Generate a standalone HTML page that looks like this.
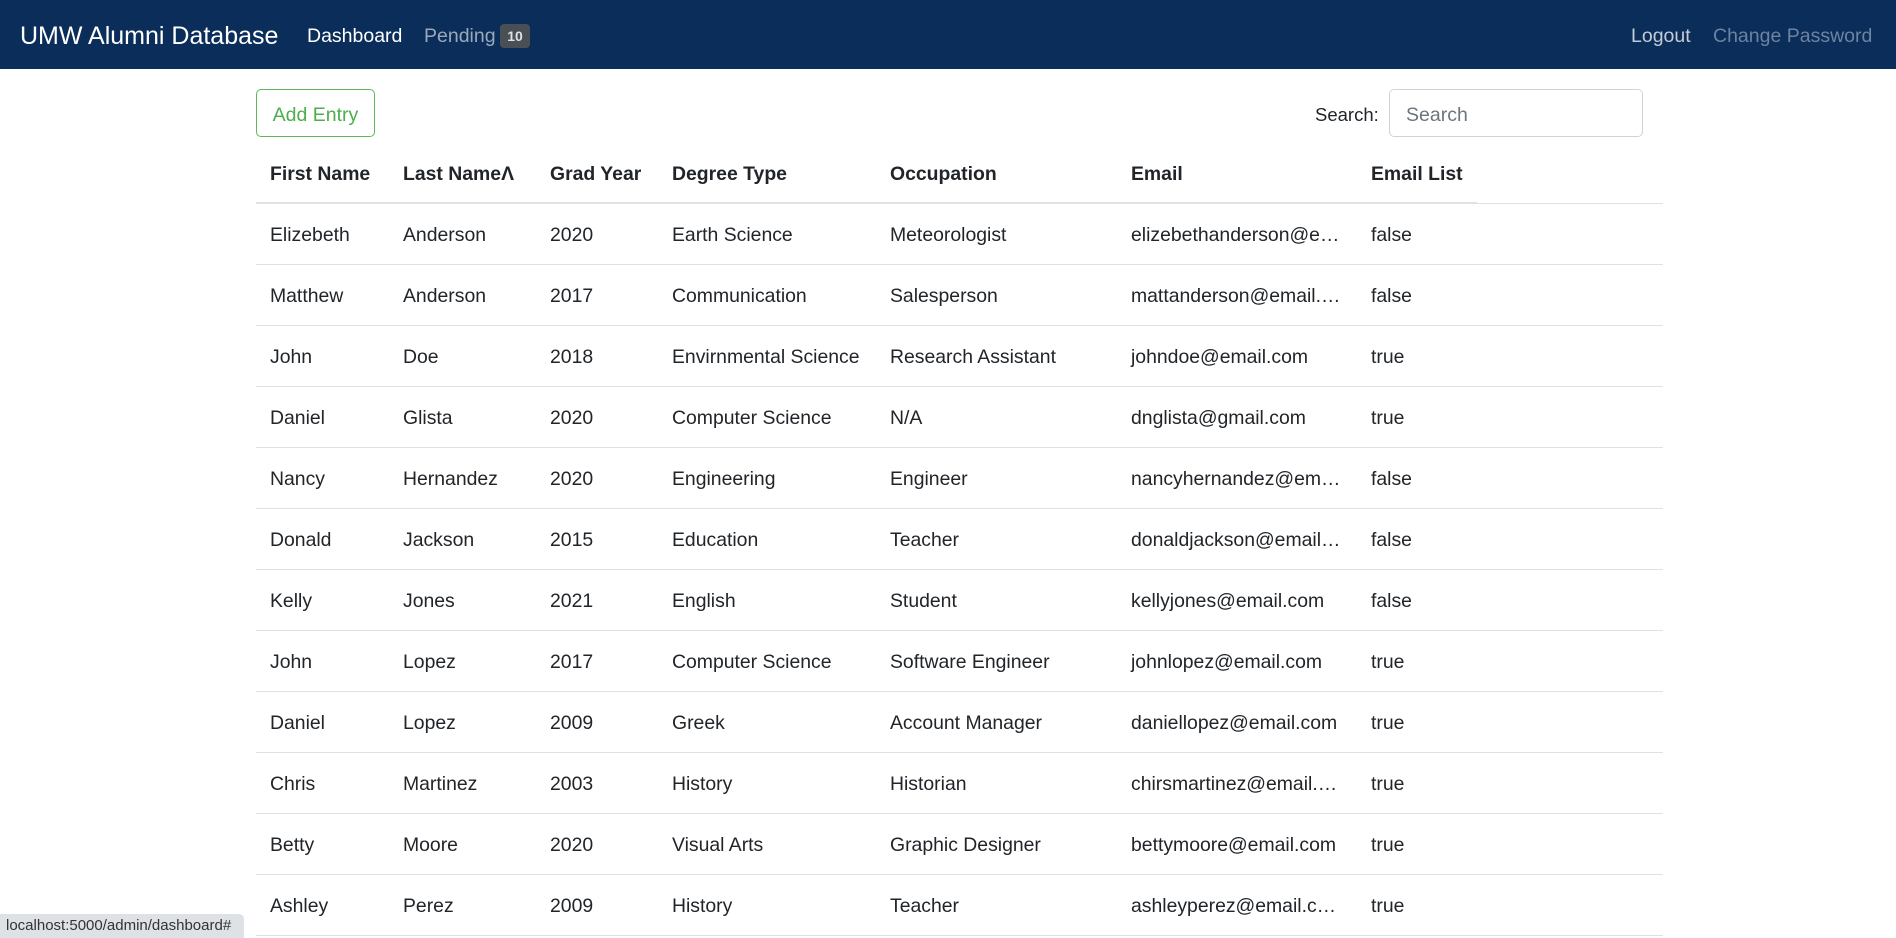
<!DOCTYPE html>
<html><head><meta charset="utf-8"><style>
*{box-sizing:border-box;margin:0;padding:0}
body{width:1896px;height:938px;overflow:hidden;background:#fff;font-family:"Liberation Sans",sans-serif;color:#212529;position:relative}
.nav{position:absolute;left:0;top:0;width:1896px;height:69px;background:#0a2d5a}
.nav span{position:absolute;top:2px;line-height:69px;font-size:19.5px;white-space:nowrap}
.brand{left:20px;font-size:25px!important;color:#fff}
.badge{position:absolute;left:500px;top:24px;width:30px;height:24px;background:#4a4f55;border-radius:4px;color:#dfe2e5;font-size:14px;font-weight:bold;text-align:center;line-height:24px}
.btn{position:absolute;left:256px;top:89px;width:119px;height:48px;border:1px solid #5cb85c;border-radius:5px;color:#4cae4c;font-size:19.5px;line-height:50px;text-align:center}
.slabel{position:absolute;left:1315px;top:91px;line-height:48px;font-size:18.5px}
.input{position:absolute;left:1389px;top:89px;width:254px;height:48px;border:1px solid #ced4da;border-radius:5px;color:#6c757d;font-size:19.5px;line-height:50px;padding-left:16px}
table{position:absolute;left:256px;top:140px;border-collapse:collapse;table-layout:fixed;width:1407px;font-size:19.4px}
th{height:63px;padding-top:6px;text-align:left;font-weight:bold;padding-left:14px;padding-right:14px;border-bottom:2px solid #dee2e6;white-space:nowrap}
th.e{border-bottom:1px solid #dee2e6}
td{height:61px;padding:4px 14px 0;border-bottom:1px solid #dee2e6;white-space:nowrap;overflow:hidden;text-overflow:ellipsis}
.status{position:absolute;left:0;top:914px;width:244px;height:24px;background:#dee1e6;border-top-right-radius:5px;font-size:15px;line-height:24px;padding-left:6px;color:#333}
</style></head><body>
<div class="nav">
<span class="brand">UMW Alumni Database</span>
<span style="left:307px;color:#fff">Dashboard</span>
<span style="left:424px;color:#9aa8bb">Pending</span>
<div class="badge">10</div>
<span style="left:1631px;color:#c5ccd6">Logout</span>
<span style="left:1713px;color:#6e83a0">Change Password</span>
</div>
<div class="btn">Add Entry</div>
<div class="slabel">Search:</div>
<div class="input">Search</div>
<table>
<colgroup><col style="width:133px"><col style="width:147px"><col style="width:122px"><col style="width:218px"><col style="width:241px"><col style="width:240px"><col style="width:120px"><col style="width:186px"></colgroup>
<tr><th>First Name</th><th>Last Name&#923;</th><th>Grad Year</th><th>Degree Type</th><th>Occupation</th><th>Email</th><th>Email List</th><th class="e"></th></tr>
<tr><td>Elizebeth</td><td>Anderson</td><td>2020</td><td>Earth Science</td><td>Meteorologist</td><td>elizebethanderson@email.com</td><td>false</td><td></td></tr>
<tr><td>Matthew</td><td>Anderson</td><td>2017</td><td>Communication</td><td>Salesperson</td><td>mattanderson@email.com</td><td>false</td><td></td></tr>
<tr><td>John</td><td>Doe</td><td>2018</td><td>Envirnmental Science</td><td>Research Assistant</td><td>johndoe@email.com</td><td>true</td><td></td></tr>
<tr><td>Daniel</td><td>Glista</td><td>2020</td><td>Computer Science</td><td>N/A</td><td>dnglista@gmail.com</td><td>true</td><td></td></tr>
<tr><td>Nancy</td><td>Hernandez</td><td>2020</td><td>Engineering</td><td>Engineer</td><td>nancyhernandez@email.com</td><td>false</td><td></td></tr>
<tr><td>Donald</td><td>Jackson</td><td>2015</td><td>Education</td><td>Teacher</td><td>donaldjackson@email.com</td><td>false</td><td></td></tr>
<tr><td>Kelly</td><td>Jones</td><td>2021</td><td>English</td><td>Student</td><td>kellyjones@email.com</td><td>false</td><td></td></tr>
<tr><td>John</td><td>Lopez</td><td>2017</td><td>Computer Science</td><td>Software Engineer</td><td>johnlopez@email.com</td><td>true</td><td></td></tr>
<tr><td>Daniel</td><td>Lopez</td><td>2009</td><td>Greek</td><td>Account Manager</td><td>daniellopez@email.com</td><td>true</td><td></td></tr>
<tr><td>Chris</td><td>Martinez</td><td>2003</td><td>History</td><td>Historian</td><td>chirsmartinez@email.com</td><td>true</td><td></td></tr>
<tr><td>Betty</td><td>Moore</td><td>2020</td><td>Visual Arts</td><td>Graphic Designer</td><td>bettymoore@email.com</td><td>true</td><td></td></tr>
<tr><td>Ashley</td><td>Perez</td><td>2009</td><td>History</td><td>Teacher</td><td>ashleyperez@email.com</td><td>true</td><td></td></tr>
</table>
<div class="status">localhost:5000/admin/dashboard#</div>
</body></html>
